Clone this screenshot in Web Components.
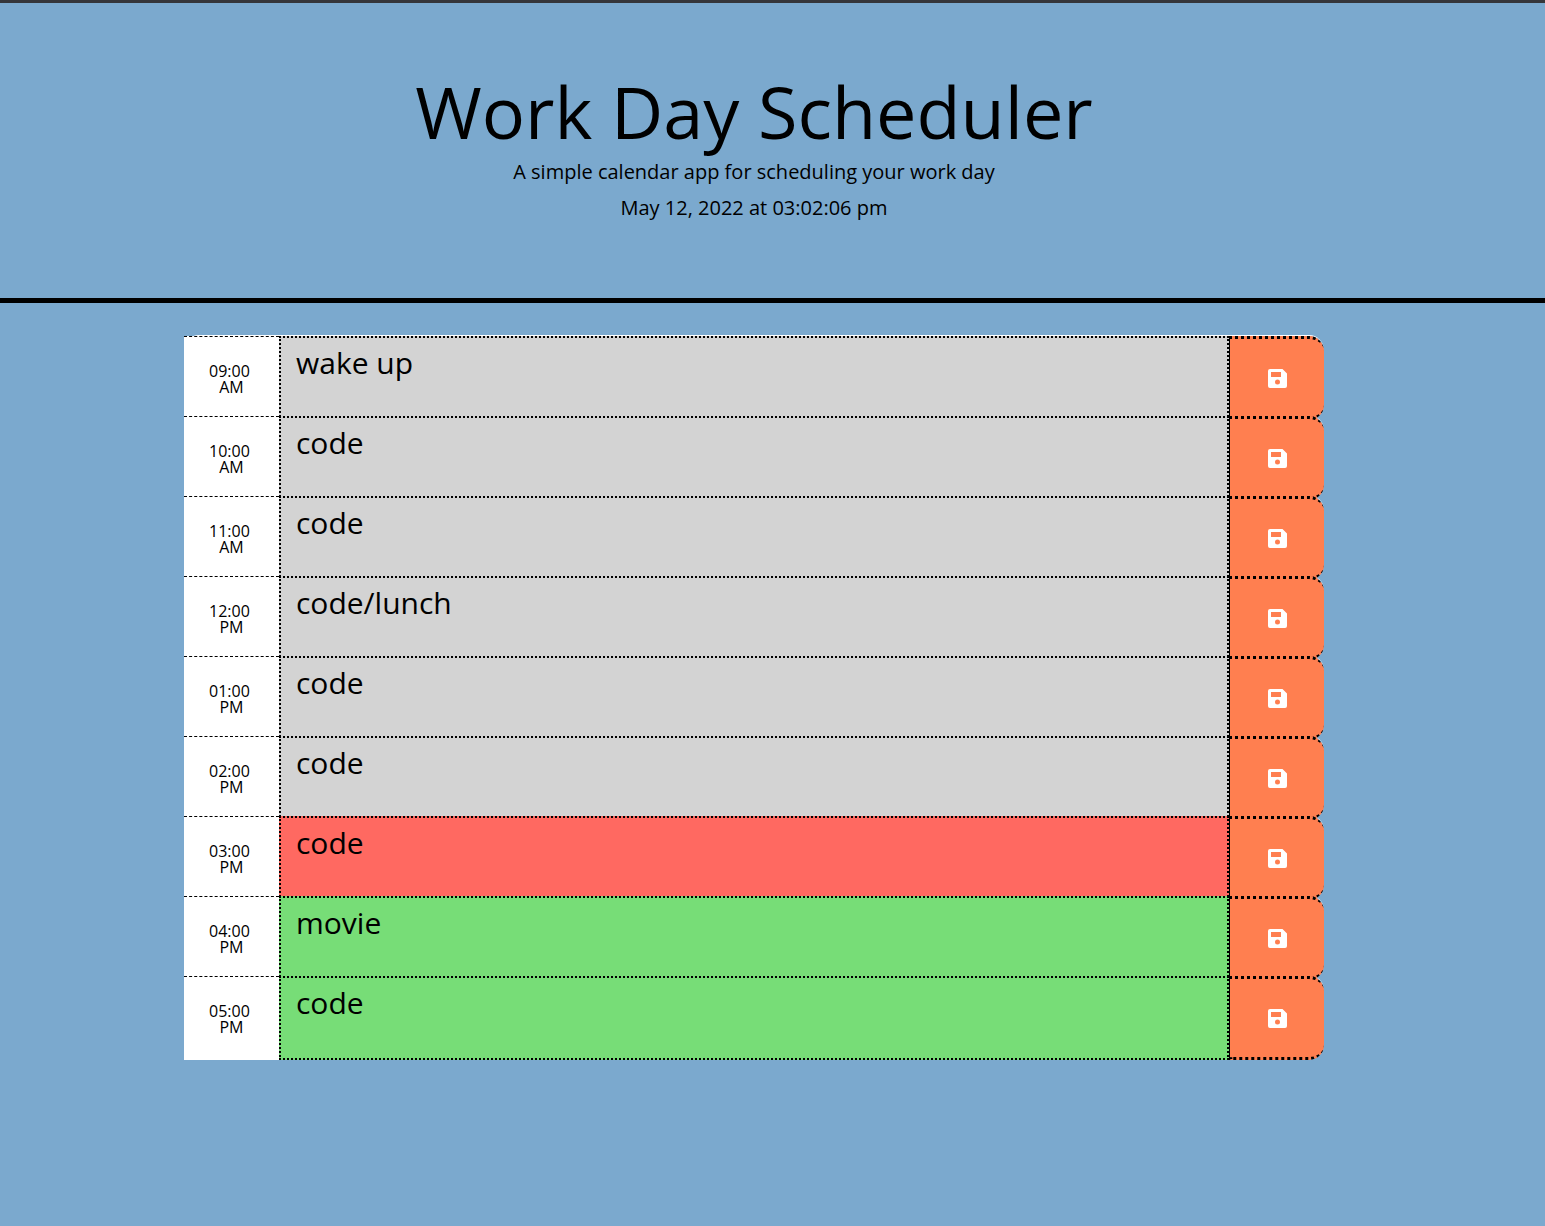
<!DOCTYPE html>
<html lang="en">
<head>
<meta charset="utf-8">
<title>Work Day Scheduler</title>
<style>
body{margin:0;min-height:100vh;background:#7ba9ce;color:#000;font-family:"Open Sans",sans-serif;font-size:16px;line-height:1.5}
</style>
</head>
<body>
<scheduler-app></scheduler-app>
<script>
class SchedulerHeader extends HTMLElement{
  constructor(){
    super();
    this.attachShadow({mode:"open"}).innerHTML=`
<style>
:host{display:block;border-top:3px solid #35363a;border-bottom:5px solid #000;margin-bottom:32px}
header{padding:68px 37px 69px 0;text-align:center}
h1{margin:0 0 6px;font-size:72px;font-weight:400;line-height:80px}
p{margin:0 0 6px;font-size:20px;line-height:30px}
</style>
<header><h1><slot name="title"></slot></h1><p><slot name="lead"></slot></p><p><slot name="date"></slot></p></header>`;
  }
}
class TimeBlock extends HTMLElement{
  connectedCallback(){
    const [hour,half]=this.getAttribute("hour").split(" ");
    const fill={past:"#d3d3d3",present:"#ff6961",future:"#77dd77"}[this.getAttribute("state")];
    this.attachShadow({mode:"open"}).innerHTML=`
<style>
:host{display:grid;grid-template-columns:minmax(0,1fr) minmax(0,10fr) minmax(0,1fr);align-items:start;box-sizing:border-box;height:80px;border-top:1px solid #fff;border-radius:15px}
label,textarea,button{position:relative;box-sizing:border-box;width:100%;height:84px;margin:0}
label{background:#fff;border-top:1px dashed #000;padding-top:26px;font-size:16px;line-height:16px;text-align:center}
textarea{background:${fill};border:2px dotted #000;border-radius:0;padding:2px 15px;font:30px/45px "Open Sans",sans-serif;color:#000;resize:none;outline:0;overflow:hidden}
button{background:#ff7f50;border:3px dotted #000;border-left:1px solid #000;border-right-width:0;border-radius:0 15px 15px 0;padding:0;display:flex;align-items:center;justify-content:center}
svg{width:19px;height:19px;fill:#fff}
</style>
<label for="task">${hour}&nbsp;<br>${half}</label>
<textarea id="task"></textarea>
<button type="button" aria-label="Save"><svg viewBox="0 0 19 19" aria-hidden="true"><path fill-rule="evenodd" d="M2 0H14.500L19 4.500V17Q19 19 17 19H2Q0 19 0 17V2Q0 0 2 0ZM3 3V8H13V3ZM9.500 10.500A2.500 2.500 0 1 0 9.500 15.500A2.500 2.500 0 1 0 9.500 10.500Z"/></svg></button>`;
    this.shadowRoot.querySelector("textarea").value=this.getAttribute("task");
  }
}
class SchedulerApp extends HTMLElement{
  constructor(){
    super();
    const rows=[["09:00 AM","wake up","past"],["10:00 AM","code","past"],["11:00 AM","code","past"],["12:00 PM","code/lunch","past"],["01:00 PM","code","past"],["02:00 PM","code","past"],["03:00 PM","code","present"],["04:00 PM","movie","future"],["05:00 PM","code","future"]];
    this.attachShadow({mode:"open"}).innerHTML=`
<style>
:host{display:block}
main{padding-right:37px}
section{max-width:1140px;margin:0 auto}
</style>
<scheduler-header><span slot="title">Work Day Scheduler</span><span slot="lead">A simple calendar app for scheduling your work day</span><time slot="date" datetime="2022-05-12T15:02:06">May 12, 2022 at 03:02:06 pm</time></scheduler-header>
<main><section>${rows.map(([h,t,s])=>`<time-block hour="${h}" task="${t}" state="${s}"></time-block>`).join("")}</section></main>`;
  }
}
customElements.define("scheduler-header",SchedulerHeader);
customElements.define("time-block",TimeBlock);
customElements.define("scheduler-app",SchedulerApp);
</script>
</body>
</html>
